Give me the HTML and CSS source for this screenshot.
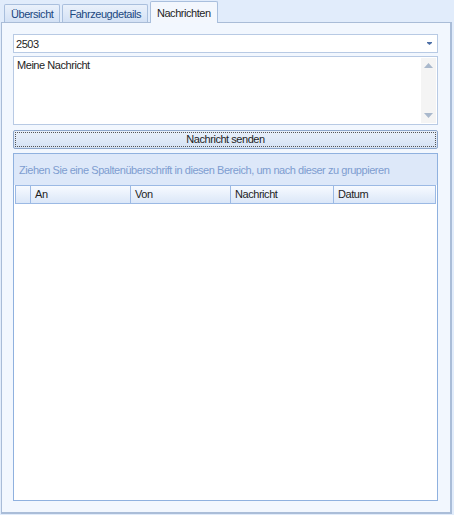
FILE: index.html
```html
<!DOCTYPE html>
<html>
<head>
<meta charset="utf-8">
<link rel="stylesheet" href="styles.css">
</head>
<body>
<div class="tabs">
  <div class="tab">Übersicht</div>
  <div class="tab">Fahrzeugdetails</div>
  <div class="tab active">Nachrichten</div>
</div>
<div class="panel">
  <div class="combo">
    <span class="combo-text">2503</span>
    <svg class="combo-arrow" width="5" height="3" viewBox="0 0 5 3"><path d="M0 0H5V1L2.5 3 0 1Z" fill="#4d6fa6"/></svg>
  </div>
  <div class="memo">
    <div class="memo-text">Meine Nachricht</div>
    <div class="scroll">
      <svg width="9" height="5" viewBox="0 0 9 5"><path d="M4.5 0L9 5H0Z" fill="#a9b8cc"/></svg>
      <svg width="9" height="5" viewBox="0 0 9 5"><path d="M0 0H9L4.5 5Z" fill="#a9b8cc"/></svg>
    </div>
  </div>
  <div class="button"><div class="button-inner">Nachricht senden</div></div>
  <div class="grid">
    <div class="group">Ziehen Sie eine Spaltenüberschrift in diesen Bereich, um nach dieser zu gruppieren</div>
    <div class="header">
      <div class="col ind"></div>
      <div class="col c1">An</div>
      <div class="col c2">Von</div>
      <div class="col c3">Nachricht</div>
      <div class="col c4">Datum</div>
    </div>
    <div class="rows"></div>
  </div>
</div>
</body>
</html>
```
FILE: styles.css
```css
html, body {
  margin: 0;
  padding: 0;
}
body {
  width: 454px;
  height: 515px;
  background: #e1ecfb;
  font-family: "Liberation Sans", Arial, sans-serif;
  font-size: 11px;
  letter-spacing: -0.45px;
  color: #1e1e1e;
  overflow: hidden;
}
.tabs {
  display: flex;
  align-items: flex-end;
  height: 22px;
  padding-left: 4px;
  box-sizing: border-box;
  position: relative;
  z-index: 2;
}
.tab {
  height: 18px;
  box-sizing: border-box;
  padding: 3px 6px 0 6px;
  margin-right: 2px;
  border: 1px solid #a9bfdd;
  border-bottom: none;
  border-radius: 2px 2px 0 0;
  background: linear-gradient(#eaf1fb, #d3e1f5);
  color: #20477f;
}
.tab.active {
  padding: 5px 6px 0 6px;
  margin-left: 0;
  background: #f3f7fd;
  color: #1e1e1e;
  border-color: #a9bfdd;
  margin-bottom: -1px;
  height: 22px;
}
.panel {
  margin-left: 1px;
  width: 451px;
  height: 492px;
  box-sizing: border-box;
  border: 1px solid #a9bcd7;
  border-right: 2px solid #aabdd8;
  border-bottom: 2px solid #aabdd8;
  background: #f2f7fe;
  padding: 11px 12px 11px 11px;
  display: flex;
  flex-direction: column;
  position: relative;
  z-index: 1;
}
.combo {
  height: 19px;
  box-sizing: border-box;
  border: 1px solid #b8cae4;
  background: #fff;
  display: flex;
  align-items: center;
  padding: 0 5px 0 2px;
}
.combo-text {
  flex: 1;
}
.combo-arrow {
  display: block;
}
.memo {
  margin-top: 3px;
  height: 69px;
  box-sizing: border-box;
  border: 1px solid #b8cae4;
  background: #fff;
  display: flex;
}
.memo-text {
  flex: 1;
  padding: 2px 3px;
}
.scroll {
  width: 15px;
  margin: 1px 1px 1px 0;
  background: #f4f4f4;
  display: flex;
  flex-direction: column;
  justify-content: space-between;
  align-items: center;
  padding: 5px 0 5px;
}
.scroll svg {
  display: block;
}
.button {
  margin-top: 5px;
  height: 19px;
  box-sizing: border-box;
  border: 1px solid #8ea7cb;
  border-radius: 2px;
  background: linear-gradient(#e9f0fa, #d5e2f4);
  padding: 1px;
}
.button-inner {
  height: 15px;
  box-sizing: border-box;
  border: 1px dotted #555;
  text-align: center;
  line-height: 13px;
  color: #1e1e1e;
}
.grid {
  margin-top: 4px;
  flex: 1;
  border: 1px solid #8fb1df;
  background: #fff;
  display: flex;
  flex-direction: column;
}
.group {
  height: 31px;
  background: #dde8f9;
  color: #7d9dd0;
  padding: 10px 0 0 5px;
  box-sizing: border-box;
}
.header {
  display: flex;
  height: 19px;
  box-sizing: border-box;
  margin: 0 1px;
  border: 1px solid #9bb9e4;
  border-right: none;
}
.col {
  box-sizing: border-box;
  border-right: 1px solid #9bb9e4;
  background: linear-gradient(#f7faff, #dbe7f8);
  padding: 2px 0 0 4px;
  color: #1e1e1e;
}
.col.ind {
  width: 15px;
  padding: 0;
}
.c1 { width: 100px; }
.c2 { width: 100px; }
.c3 { width: 103px; }
.c4 { flex: 1; }
.rows {
  flex: 1;
}
```
